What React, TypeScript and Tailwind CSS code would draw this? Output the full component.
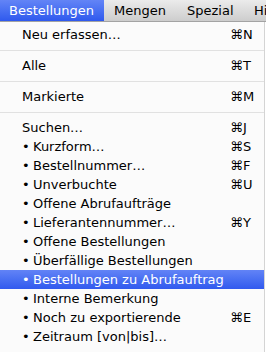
import React from "react";

type Entry =
  | { kind: "item"; label: string; bullet?: boolean; shortcut?: string; active?: boolean }
  | { kind: "sep" };

const entries: Entry[] = [
  { kind: "item", label: "Neu erfassen…", shortcut: "⌘N" },
  { kind: "sep" },
  { kind: "item", label: "Alle", shortcut: "⌘T" },
  { kind: "sep" },
  { kind: "item", label: "Markierte", shortcut: "⌘M" },
  { kind: "sep" },
  { kind: "item", label: "Suchen…", shortcut: "⌘J" },
  { kind: "item", label: "Kurzform…", bullet: true, shortcut: "⌘S" },
  { kind: "item", label: "Bestellnummer…", bullet: true, shortcut: "⌘F" },
  { kind: "item", label: "Unverbuchte", bullet: true, shortcut: "⌘U" },
  { kind: "item", label: "Offene Abrufaufträge", bullet: true },
  { kind: "item", label: "Lieferantennummer…", bullet: true, shortcut: "⌘Y" },
  { kind: "item", label: "Offene Bestellungen", bullet: true },
  { kind: "item", label: "Überfällige Bestellungen", bullet: true },
  { kind: "item", label: "Bestellungen zu Abrufauftrag", bullet: true, active: true },
  { kind: "item", label: "Interne Bemerkung", bullet: true },
  { kind: "item", label: "Noch zu exportierende", bullet: true, shortcut: "⌘E" },
  { kind: "item", label: "Zeitraum [von|bis]…", bullet: true },
];

export default function App() {
  return (
    <div className="w-[266px] h-[352px] overflow-hidden bg-white font-['DejaVu_Sans',sans-serif] text-[13px] text-black">
      <div className="flex h-[22px] overflow-hidden border-b border-[#a3a3a3] bg-gradient-to-b from-[#ebebeb] to-[#cdcdcd] leading-[21px] whitespace-nowrap">
        <div className="w-[104px] shrink-0 pl-[9px] bg-gradient-to-b from-[#6384f6] to-[#2f59ee] text-white">
          Bestellungen
        </div>
        <div className="w-[83px] shrink-0 pl-[10px]">Mengen</div>
        <div className="w-[67px] shrink-0">Spezial</div>
        <div className="shrink-0">Hi</div>
      </div>

      <div className="w-[265px] border-r border-[#d4d4d4] bg-[#fbfbfb] pt-[3px] pb-[6px]">
        {entries.map((e, i) =>
          e.kind === "sep" ? (
            <div key={i} className="mt-[6px] mb-[5px] h-px bg-[#e1e1e1]" />
          ) : (
            <div
              key={i}
              className={
                e.active
                  ? "flex h-[19px] items-center pl-[22px] leading-[19px] bg-gradient-to-b from-[#6283f6] to-[#3159ee] text-white"
                  : "flex h-[19px] items-center pl-[22px] leading-[19px]"
              }
            >
              {e.bullet && <span className="w-[11px] shrink-0">•</span>}
              <span className="flex-1 whitespace-nowrap">{e.label}</span>
              <span className="w-[34px] shrink-0 whitespace-nowrap">{e.shortcut}</span>
            </div>
          )
        )}
      </div>
    </div>
  );
}
